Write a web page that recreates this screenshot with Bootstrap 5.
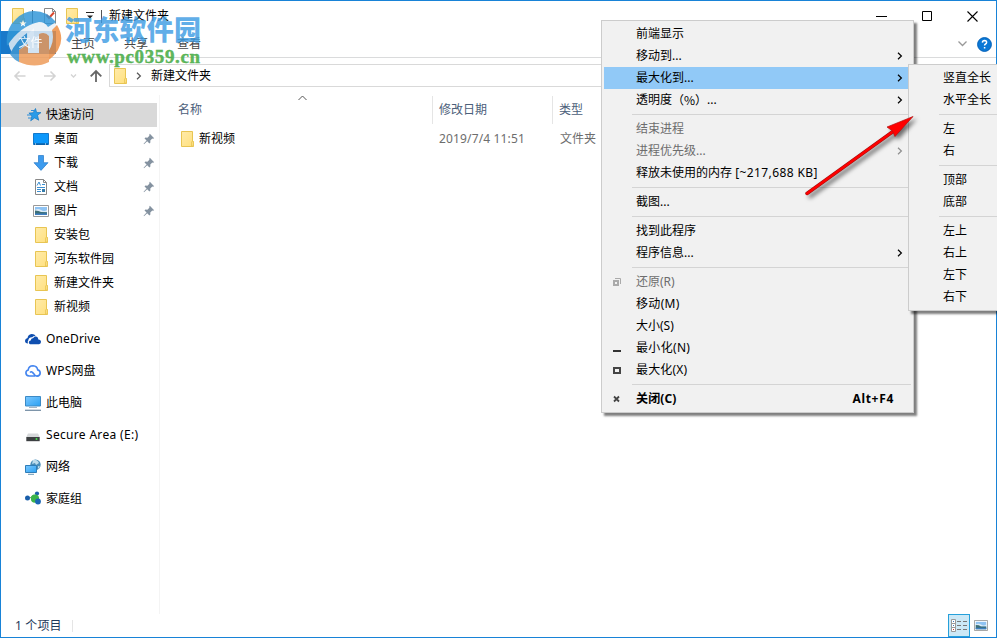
<!DOCTYPE html>
<html lang="zh-CN">
<head>
<meta charset="utf-8">
<title>新建文件夹</title>
<link href="https://cdn.jsdelivr.net/npm/bootstrap@5.3.0/dist/css/bootstrap.min.css" rel="stylesheet">
<style>
body{width:997px;height:638px;overflow:hidden;font:12px/22px "Noto Sans","Noto Sans CJK SC",sans-serif;color:#000;background:#fff}
svg{display:block;flex:none}
.win{width:997px;height:638px;border:1px solid #1883d7}
.titlebar{height:30px}
.quick{padding:0 0 0 9px}
.vbar{width:1px;height:13px;background:#555}
.vbar-a{margin-left:6px;margin-right:9px}
.vbar-b{margin-left:7px;margin-right:7px}
.qfolder{margin-left:6px}
.qdrop{margin-left:6px}
.capbtns{padding-right:18px;gap:35px}
.tabs{height:27px;border-bottom:1px solid #dadbdc}
.filetab{width:55px;height:23px;background:#1979ca;color:#fff;padding-left:4px}
.filetab span{position:relative;z-index:5;color:#fff;opacity:.9}
.tab-item{width:53px;color:#444;line-height:25px}
.tab-first{margin-left:15px}
.nav-row{height:37px;padding-top:6px}
.nav-icons{width:108px;height:23px;padding-left:12px}
.addr{height:23px;border:1px solid #d9d9d9;line-height:20px}
.crumb{margin:0 9px 0 8px;color:#555}
.body-area{height:518px}
.side{width:159px;border-right:1px solid #f4f4f4;padding-top:8px;height:519px}
.side-row{height:24px;padding-left:32px;gap:5px}
.side-row.quickhead{width:156px;background:#d9d9d9;padding-left:25px;gap:4px}
.side-row .pin{margin-left:auto;margin-right:4px}
.root-row{height:24px;margin-top:8px;padding-left:24px;gap:5px}
.wide-a{letter-spacing:.15px}
.wide-b{letter-spacing:.32px}
.wide-c{letter-spacing:.4px}
.wide-d{letter-spacing:.7px}
.colhead{height:32px;color:#4c607a;padding-top:1px}
.colhead>div{height:28px;line-height:27px}
.sorter{left:138px;top:0}
.c1{width:272px;padding-left:18px}
.c2{width:120px;padding-left:6px}
.c3{padding-left:6px}
.c-line{border-left:1px solid #e5e5e5}
.file-row{height:24px;color:#6d6d6d}
.file-name{padding-left:19px;gap:4px}
.file-date{padding-left:7px}
.status{height:24px;color:#1e395b;padding:1px 0 0 14px}
.status-line{height:12px;margin-left:10px}
.viewon{width:22px;height:23px;background:#cce8f6;border:1px solid #26a0da}
.popmenu{position:absolute;background:#f1f1f1;border:1px solid #ccc;padding:2px;box-shadow:3px 3px 2px rgba(0,0,0,.5);z-index:5}
.mainmenu{left:601px;top:20px;width:313px;height:393px}
.submenu{left:908px;top:64px;width:120px;height:247px;z-index:6}
.mi{height:22px;line-height:21px;padding-right:8px;padding-bottom:1px}
.mi .gut{width:32px;height:21px;display:flex;align-items:center;padding-left:8px}
.mi.hot{background:#91c9f7;margin-right:2px;padding-right:6px}
.mi.off{color:#6d6d6d}
.midparen{font-family:"Noto Sans CJK TC",sans-serif}
.msep{height:7px;padding:3px 0 3px 28px}
.msep::before{content:"";display:block;height:1px;background:#d4d4d4}
.shortcut{padding-right:9px}
.clip{position:absolute;left:0;top:0;width:997px;height:638px;overflow:hidden}
.overlay{position:absolute;left:0;top:0;z-index:9}
.wm{z-index:4}
.pointer{filter:drop-shadow(3px 3px 2px rgba(0,0,0,.55))}
</style>
<script src="https://cdn.jsdelivr.net/npm/bootstrap@5.3.0/dist/js/bootstrap.bundle.min.js"></script>
</head>
<body>
<svg width="0" height="0" class="position-absolute">
<defs>
<linearGradient id="fg" x1="0" y1="0" x2="1" y2="1"><stop offset="0" stop-color="#ffebaa"/><stop offset="1" stop-color="#ffe07e"/></linearGradient>
<linearGradient id="bg1" x1="0" y1="0" x2="1" y2="1"><stop offset="0" stop-color="#7cc8ff"/><stop offset="1" stop-color="#2aa0f2"/></linearGradient>
<symbol id="folder" viewBox="0 0 16 16"><path d="M2.5.5h11v10h1v5h-12z" fill="url(#fg)" stroke="#e8c553"/><path d="M12.500 15v-4l1-1 .8 1v4z" fill="#ffe389" stroke="#e8c553" stroke-width=".8"/></symbol>
<symbol id="pin" viewBox="0 0 12 12"><path d="M6.800.8 11.200 5.200l-1.200.5-.7-.2-2 2 .1 2-1 .9-2.200-2.200L1 11.200l-.4-.4 3-3.300L1.500 5.500l.9-.9 2 .1 2-2-.2-.8z" fill="#8492a0"/></symbol>
<symbol id="arr" viewBox="0 0 6 8"><path d="M1 .7 4.400 4 1 7.300" fill="none" stroke="currentColor" stroke-width="1.200"/></symbol>
<symbol id="pic" viewBox="0 0 16 12"><path d="M.5.5h15v11H.5z" fill="#fff" stroke="#999"/><path d="M2 2h12v8H2z" fill="#8fc3f3"/><path d="M2 5q3-2 6 0t6 0v2H2z" fill="#dcebf6"/><path d="M2 5.500q4 0 6 1.500l6 .2V10H2z" fill="#3c6f78"/><path d="M2 8.500h12V10H2z" fill="#3f7fc2"/></symbol>
</defs></svg>

<div class="win d-flex flex-column">
  <header class="titlebar d-flex align-items-center">
    <div class="quick d-flex align-items-center">
      <svg width="16" height="16"><use href="#folder"/></svg>
      <span class="vbar vbar-a"></span>
      <svg width="16" height="16" viewBox="0 0 16 16"><path d="M2.500.5h8l3 3v12h-11z" fill="#fff" stroke="#888"/><path d="M10.500.5v3h3" fill="none" stroke="#888"/><path d="m4.500 7 2.500 3L12 4.500" fill="none" stroke="#d9482e" stroke-width="2"/></svg>
      <svg class="qfolder" width="16" height="16"><use href="#folder"/></svg>
      <svg class="qdrop" width="8" height="8" viewBox="0 0 8 8"><path d="M0 .5h8" stroke="#222"/><path d="M1 3.500h6L4 6.500z" fill="#222"/></svg>
      <span class="vbar vbar-b"></span>
      <span>新建文件夹</span>
    </div>
    <div class="capbtns d-flex align-items-center ms-auto">
      <svg width="11" height="12"><path d="M0 6.500h11" stroke="#000"/></svg>
      <svg width="10" height="10"><path d="M.5.5h9v9h-9z" fill="none" stroke="#000"/></svg>
      <svg width="11" height="11"><path d="m.5.5 10 10M10.500.5l-10 10" stroke="#000" stroke-width="1.100"/></svg>
    </div>
  </header>

  <nav class="tabs d-flex">
    <div class="filetab d-flex justify-content-center align-items-center"><span>文件</span></div>
    <div class="tab-item tab-first">主页</div>
    <div class="tab-item">共享</div>
    <div class="tab-item">查看</div>
    <div class="ms-auto d-flex align-items-center gap-2 pe-1">
      <svg width="11" height="6"><path d="m.5.5 4 4 4-4" fill="none" stroke="#999" stroke-width="1.300"/></svg>
      <svg width="15" height="15" viewBox="0 0 15 15"><circle cx="7.500" cy="7.500" r="6.900" fill="#0a78d6" stroke="#0662b8"/><path d="M5.400 5.600q.1-2 2.200-2 2 .1 2 1.800 0 1-1.100 1.600-.9.5-.9 1.500M7.600 10v1.600" fill="none" stroke="#fff" stroke-width="1.500"/></svg>
    </div>
  </nav>

  <div class="nav-row d-flex">
    <div class="nav-icons d-flex align-items-center">
      <svg width="90" height="14" viewBox="0 0 90 14"><g fill="none" stroke="#d3d3d3" stroke-width="1.600"><path d="M12.500 7H2M6.500 2.500 2 7l4.500 4.500M31 7h11M37.500 2.500 42 7l-4.500 4.500"/><path d="m58 5.500 2.500 2.500L63 5.500" stroke-width="1.300"/></g><path d="M83 13V2M77.700 7.300 83 2l5.300 5.300" fill="none" stroke="#666" stroke-width="1.800"/></svg>
    </div>
    <div class="addr flex-grow-1 d-flex align-items-center ps-0">
      <svg width="18" height="16" viewBox="-2 0 18 16"><use href="#folder" width="16" height="16"/></svg>
      <svg class="crumb" width="6" height="8"><use href="#arr"/></svg>
      <span>新建文件夹</span>
    </div>
  </div>

  <main class="body-area d-flex">
    <aside class="side">
      <div class="side-row quickhead d-flex align-items-center">
        <svg width="16" height="16" viewBox="0 0 16 16"><path d="m9.500 1.500 1.100 4 4.400.1-3.500 2.600 1.200 5-4-2.300-4 2.900 1.200-4.900-3-2.800 4.200-.3z" fill="#2a9be8" stroke="#1479c4" stroke-width=".7"/><path d="M1 8h4M2 11h3M5 3.500h3" stroke="#2a8edb"/></svg><span>快速访问</span></div>
      <div class="side-row d-flex align-items-center"><svg width="16" height="16" viewBox="0 0 16 16"><path d="M.5 2.500h15v11H.5z" fill="#0d98fb" stroke="#1479cb"/><path d="M1 13h14" stroke="#064b87"/><path d="M2 13h1M12 13h1" stroke="#fff"/></svg><span>桌面</span><svg class="pin" width="12" height="12"><use href="#pin"/></svg></div>
      <div class="side-row d-flex align-items-center"><svg width="16" height="16" viewBox="0 0 16 16"><path d="M5.500.5h5v7.200h4.500L8 15.400 1 7.700h4.500z" fill="#3d9bee" stroke="#2579c9" stroke-width=".7"/></svg><span>下载</span><svg class="pin" width="12" height="12"><use href="#pin"/></svg></div>
      <div class="side-row d-flex align-items-center"><svg width="16" height="16" viewBox="0 0 16 16"><path d="M2.500.5h8l3 3v12h-11z" fill="#fff" stroke="#888"/><path d="M10.500.5v3h3" fill="none" stroke="#888"/><path d="M4 6.500 6 3l1.500 3.500M9 5.500h3M4 8.500h8M4 10.500h4M4 12.500h4" fill="none" stroke="#3c8fd1"/><path d="M9 10h3v3H9z" fill="#357ba9"/></svg><span>文档</span><svg class="pin" width="12" height="12"><use href="#pin"/></svg></div>
      <div class="side-row d-flex align-items-center"><svg width="16" height="12"><use href="#pic"/></svg><span>图片</span><svg class="pin" width="12" height="12"><use href="#pin"/></svg></div>
      <div class="side-row d-flex align-items-center"><svg width="16" height="16"><use href="#folder"/></svg><span>安装包</span></div>
      <div class="side-row d-flex align-items-center"><svg width="16" height="16"><use href="#folder"/></svg><span>河东软件园</span></div>
      <div class="side-row d-flex align-items-center"><svg width="16" height="16"><use href="#folder"/></svg><span>新建文件夹</span></div>
      <div class="side-row d-flex align-items-center"><svg width="16" height="16"><use href="#folder"/></svg><span>新视频</span></div>

      <div class="root-row d-flex align-items-center"><svg width="16" height="16" viewBox="0 0 16 16"><path d="M3 12.500Q0 12.400 0 9.800q.1-2.300 2.500-2.700Q3 3.500 6.500 3q3-.2 4.300 2.300-2-.8-3.500.9-3.500-.2-4 3-1.100 1.500-.3 3.300z" fill="#0f4fb0"/><path d="M5 13.200q-1.200-.5-1.200-1.900.2-1.700 1.900-1.900.1-2.300 2.600-2.500Q9.500 4.800 11.800 5.700q1.500.8 1.500 2.800 2.700.1 2.700 2.500-.1 2-2 2.200z" fill="#0f4fb0"/></svg><span class="wide-a">OneDrive</span></div>
      <div class="root-row d-flex align-items-center"><svg width="16" height="16" viewBox="0 0 16 16"><path d="M10 13H4.200Q1 12.700.9 9.900 1 7.500 3.200 7 3.700 2.800 8 2.700q4.100.2 4.700 4.200 2.400.6 2.500 3-.1 3-3.200 3.200-1.800-.2-2.800-1.800L7.500 9.400Q6.400 8 5 9.500" fill="none" stroke="#4485ef" stroke-width="1.600"/></svg><span class="wide-a">WPS网盘</span></div>
      <div class="root-row d-flex align-items-center"><svg width="16" height="16" viewBox="0 0 16 16"><path d="M.5 1.500h15v9.500H.5z" fill="url(#bg1)" stroke="#3c8ac5"/><path d="M4 12.500h8" stroke="#a6b6c4"/><path d="M0 15.300h16" stroke="#7890a6" stroke-width="1.300"/></svg><span>此电脑</span></div>
      <div class="root-row d-flex align-items-center"><svg width="16" height="16" viewBox="0 0 16 16"><path d="m3 6.500 10-.1 1.700 3.600H1.300z" fill="#d6d8da"/><path d="M1.300 10h13.400v4.200H1.300z" fill="#3d4042"/><circle cx="11.500" cy="12" r="1" fill="#43e04b"/></svg><span class="wide-b">Secure Area (E:)</span></div>
      <div class="root-row d-flex align-items-center"><svg width="16" height="16" viewBox="0 0 16 16"><circle cx="10.500" cy="5.700" r="5.200" fill="#4a8db8"/><path d="M8 1q4-1 6 3l-3 2-1-2-3 1zM13 7l2 .500-2 2.500z" fill="#bddcec"/><path d="M.5 6.500h11v7H.5z" fill="url(#bg1)" stroke="#2f7db8"/><path d="M3 15.300h6" stroke="#6a97b5"/></svg><span>网络</span></div>
      <div class="root-row d-flex align-items-center"><svg width="16" height="16" viewBox="0 0 16 16"><circle cx="2.500" cy="7" r="2.500" fill="#1a5eaa"/><path d="m5 7 4-3 3 2" stroke="#58a55c" fill="none"/><circle cx="12" cy="2.500" r="2.100" fill="#1a5eaa"/><circle cx="10" cy="7.700" r="4.100" fill="#3bb44a"/><circle cx="13" cy="10.500" r="2.900" fill="#1a66b5"/></svg><span>家庭组</span></div>
    </aside>

    <section class="flex-grow-1">
      <div class="colhead d-flex position-relative">
        <div class="c1">名称</div>
        <svg class="position-absolute sorter" width="9" height="6"><path d="m.5 5 4-4 4 4" fill="none" stroke="#555"/></svg>
        <div class="c2 c-line">修改日期</div>
        <div class="c3 c-line">类型</div>
      </div>
      <div class="file-row d-flex align-items-center">
        <div class="c1 file-name d-flex align-items-center text-black"><svg width="16" height="16"><use href="#folder"/></svg><span>新视频</span></div>
        <div class="c2 file-date wide-a">2019/7/4 11:51</div>
        <div class="c3 ps-2">文件夹</div>
      </div>
    </section>
  </main>

  <footer class="status d-flex align-items-center">
    <span class="wide-a">1 个项目</span><span class="c-line status-line"></span>
    <div class="ms-auto d-flex align-items-center gap-1 pe-2">
      <div class="viewon d-flex align-items-center justify-content-center"><svg width="17" height="13" viewBox="0 0 17 13"><g fill="#fff" stroke="#999"><path d="M.5.5h4v4h-4zM.5 4.500h4v4h-4zM.5 8.500h4v4h-4z"/></g><path d="M6 2.500h4M12 2.500h4M6 6.500h4M12 6.500h4M6 10.500h4M12 10.500h4" stroke="#777"/><path d="M2 2.500h1M2 6.500h1" stroke="#3979bd"/><path d="M2 10.500h1" stroke="#c33"/></svg></div>
      <svg width="14" height="11" viewBox="0 0 16 12" preserveAspectRatio="none"><use href="#pic" width="16" height="12"/></svg>
    </div>
  </footer>
</div>

<svg class="overlay wm" width="210" height="75" viewBox="0 0 210 75">
  <g opacity=".84">
    <circle cx="34" cy="38.500" r="26" fill="#e9f0f6"/>
    <path d="M7 46Q5 29 16 19 24 11 34 11 47 11 56 22L48 27Q45 22 39 22 20 26 7 46z" fill="#3297d8"/>
    <path d="M10 54Q16 41 27 33V43L19 50V62Q13 59 10 54z" fill="#3f97d3"/>
    <path d="M57 25Q65 38 58 50 53 58 44 63V57Q56 44 52 30z" fill="#ee8d42"/>
    <path d="M19 50 28 44V53H39V34Q45 31 49 36V62Q35 69 19 62z" fill="#ee9a58"/>
    <path d="M28 53V34L34 28V45H39V53z" fill="#f6f8fa"/>
    <path d="m23 20 1 2.500h2.500l-2 1.600.7 2.400-2.200-1.400-2.200 1.400.7-2.400-2-1.600H22z" fill="#fff"/>
  </g>
  <text x="65" y="40" font-family="Noto Sans CJK SC" font-weight="900" font-size="27" fill="#3d9ce3" fill-opacity=".82" textLength="136">河东软件园</text>
  <text x="67" y="63" font-family="Liberation Serif" font-weight="bold" font-size="19" fill="#4aad48" fill-opacity=".88" stroke="#4aad48" stroke-width=".4" textLength="133">www.pc0359.cn</text>
</svg>

<div class="clip">
<div class="popmenu mainmenu">
  <div class="mi d-flex align-items-center"><span class="gut"></span>前端显示</div>
  <div class="mi d-flex align-items-center"><span class="gut"></span>移动到...<svg class="ms-auto" width="6" height="8"><use href="#arr"/></svg></div>
  <div class="mi hot d-flex align-items-center"><span class="gut"></span>最大化到...<svg class="ms-auto" width="6" height="8"><use href="#arr"/></svg></div>
  <div class="mi d-flex align-items-center"><span class="gut"></span>透明度<span class="midparen" lang="zh-TW">（%）</span>...<svg class="ms-auto" width="6" height="8"><use href="#arr"/></svg></div>
  <div class="msep"></div>
  <div class="mi off d-flex align-items-center"><span class="gut"></span>结束进程</div>
  <div class="mi off d-flex align-items-center"><span class="gut"></span>进程优先级...<svg class="ms-auto opacity-75" width="6" height="8"><use href="#arr"/></svg></div>
  <div class="mi d-flex align-items-center"><span class="gut"></span>释放未使用的内存&nbsp;<span class="wide-c">[~217,688 KB]</span></div>
  <div class="msep"></div>
  <div class="mi d-flex align-items-center"><span class="gut"></span>截图...</div>
  <div class="msep"></div>
  <div class="mi d-flex align-items-center"><span class="gut"></span>找到此程序</div>
  <div class="mi d-flex align-items-center"><span class="gut"></span>程序信息...<svg class="ms-auto" width="6" height="8"><use href="#arr"/></svg></div>
  <div class="msep"></div>
  <div class="mi off d-flex align-items-center"><span class="gut"><svg width="9" height="8"><path d="M3 .5h5.500V6" fill="none" stroke="#aaa"/><path d="M2 3h4v4H2z" fill="#f1f1f1" stroke="#aaa" stroke-width="2"/></svg></span>还原(R)</div>
  <div class="mi d-flex align-items-center"><span class="gut"></span><span class="wide-b">移动(M)</span></div>
  <div class="mi d-flex align-items-center"><span class="gut"></span>大小(S)</div>
  <div class="mi d-flex align-items-center"><span class="gut"><svg width="9" height="10"><path d="M1 8h8" stroke="#333" stroke-width="2"/></svg></span><span class="wide-b">最小化(N)</span></div>
  <div class="mi d-flex align-items-center"><span class="gut"><svg width="9" height="9"><path d="M2 3h6v5H2z" fill="none" stroke="#444" stroke-width="2"/></svg></span><span class="wide-a">最大化(X)</span></div>
  <div class="msep"></div>
  <div class="mi fw-bold d-flex align-items-center"><span class="gut"><svg width="9" height="9"><path d="m2 2.500 5 5M7 2.500l-5 5" stroke="#444" stroke-width="1.800"/></svg></span><span class="wide-a">关闭(C)</span><span class="ms-auto wide-d shortcut">Alt+F4</span></div>
</div>

<div class="popmenu submenu">
  <div class="mi d-flex"><span class="gut"></span>竖直全长</div>
  <div class="mi d-flex"><span class="gut"></span>水平全长</div>
  <div class="msep"></div>
  <div class="mi d-flex"><span class="gut"></span>左</div>
  <div class="mi d-flex"><span class="gut"></span>右</div>
  <div class="msep"></div>
  <div class="mi d-flex"><span class="gut"></span>顶部</div>
  <div class="mi d-flex"><span class="gut"></span>底部</div>
  <div class="msep"></div>
  <div class="mi d-flex"><span class="gut"></span>左上</div>
  <div class="mi d-flex"><span class="gut"></span>右上</div>
  <div class="mi d-flex"><span class="gut"></span>左下</div>
  <div class="mi d-flex"><span class="gut"></span>右下</div>
</div>

<svg class="overlay pointer" width="997" height="220">
  <path d="m807 193.500 86-62" stroke="#a01010" stroke-width="3.400" stroke-linecap="round"/>
  <path d="m807 193.500 86-62" stroke="#f00" stroke-width="2.400" stroke-linecap="round"/>
  <path d="M913 116.500 887 127 892.500 131 895 136.500z" fill="#f00" stroke="#b01010" stroke-width=".7"/>
</svg>
</div>
</body>
</html>
